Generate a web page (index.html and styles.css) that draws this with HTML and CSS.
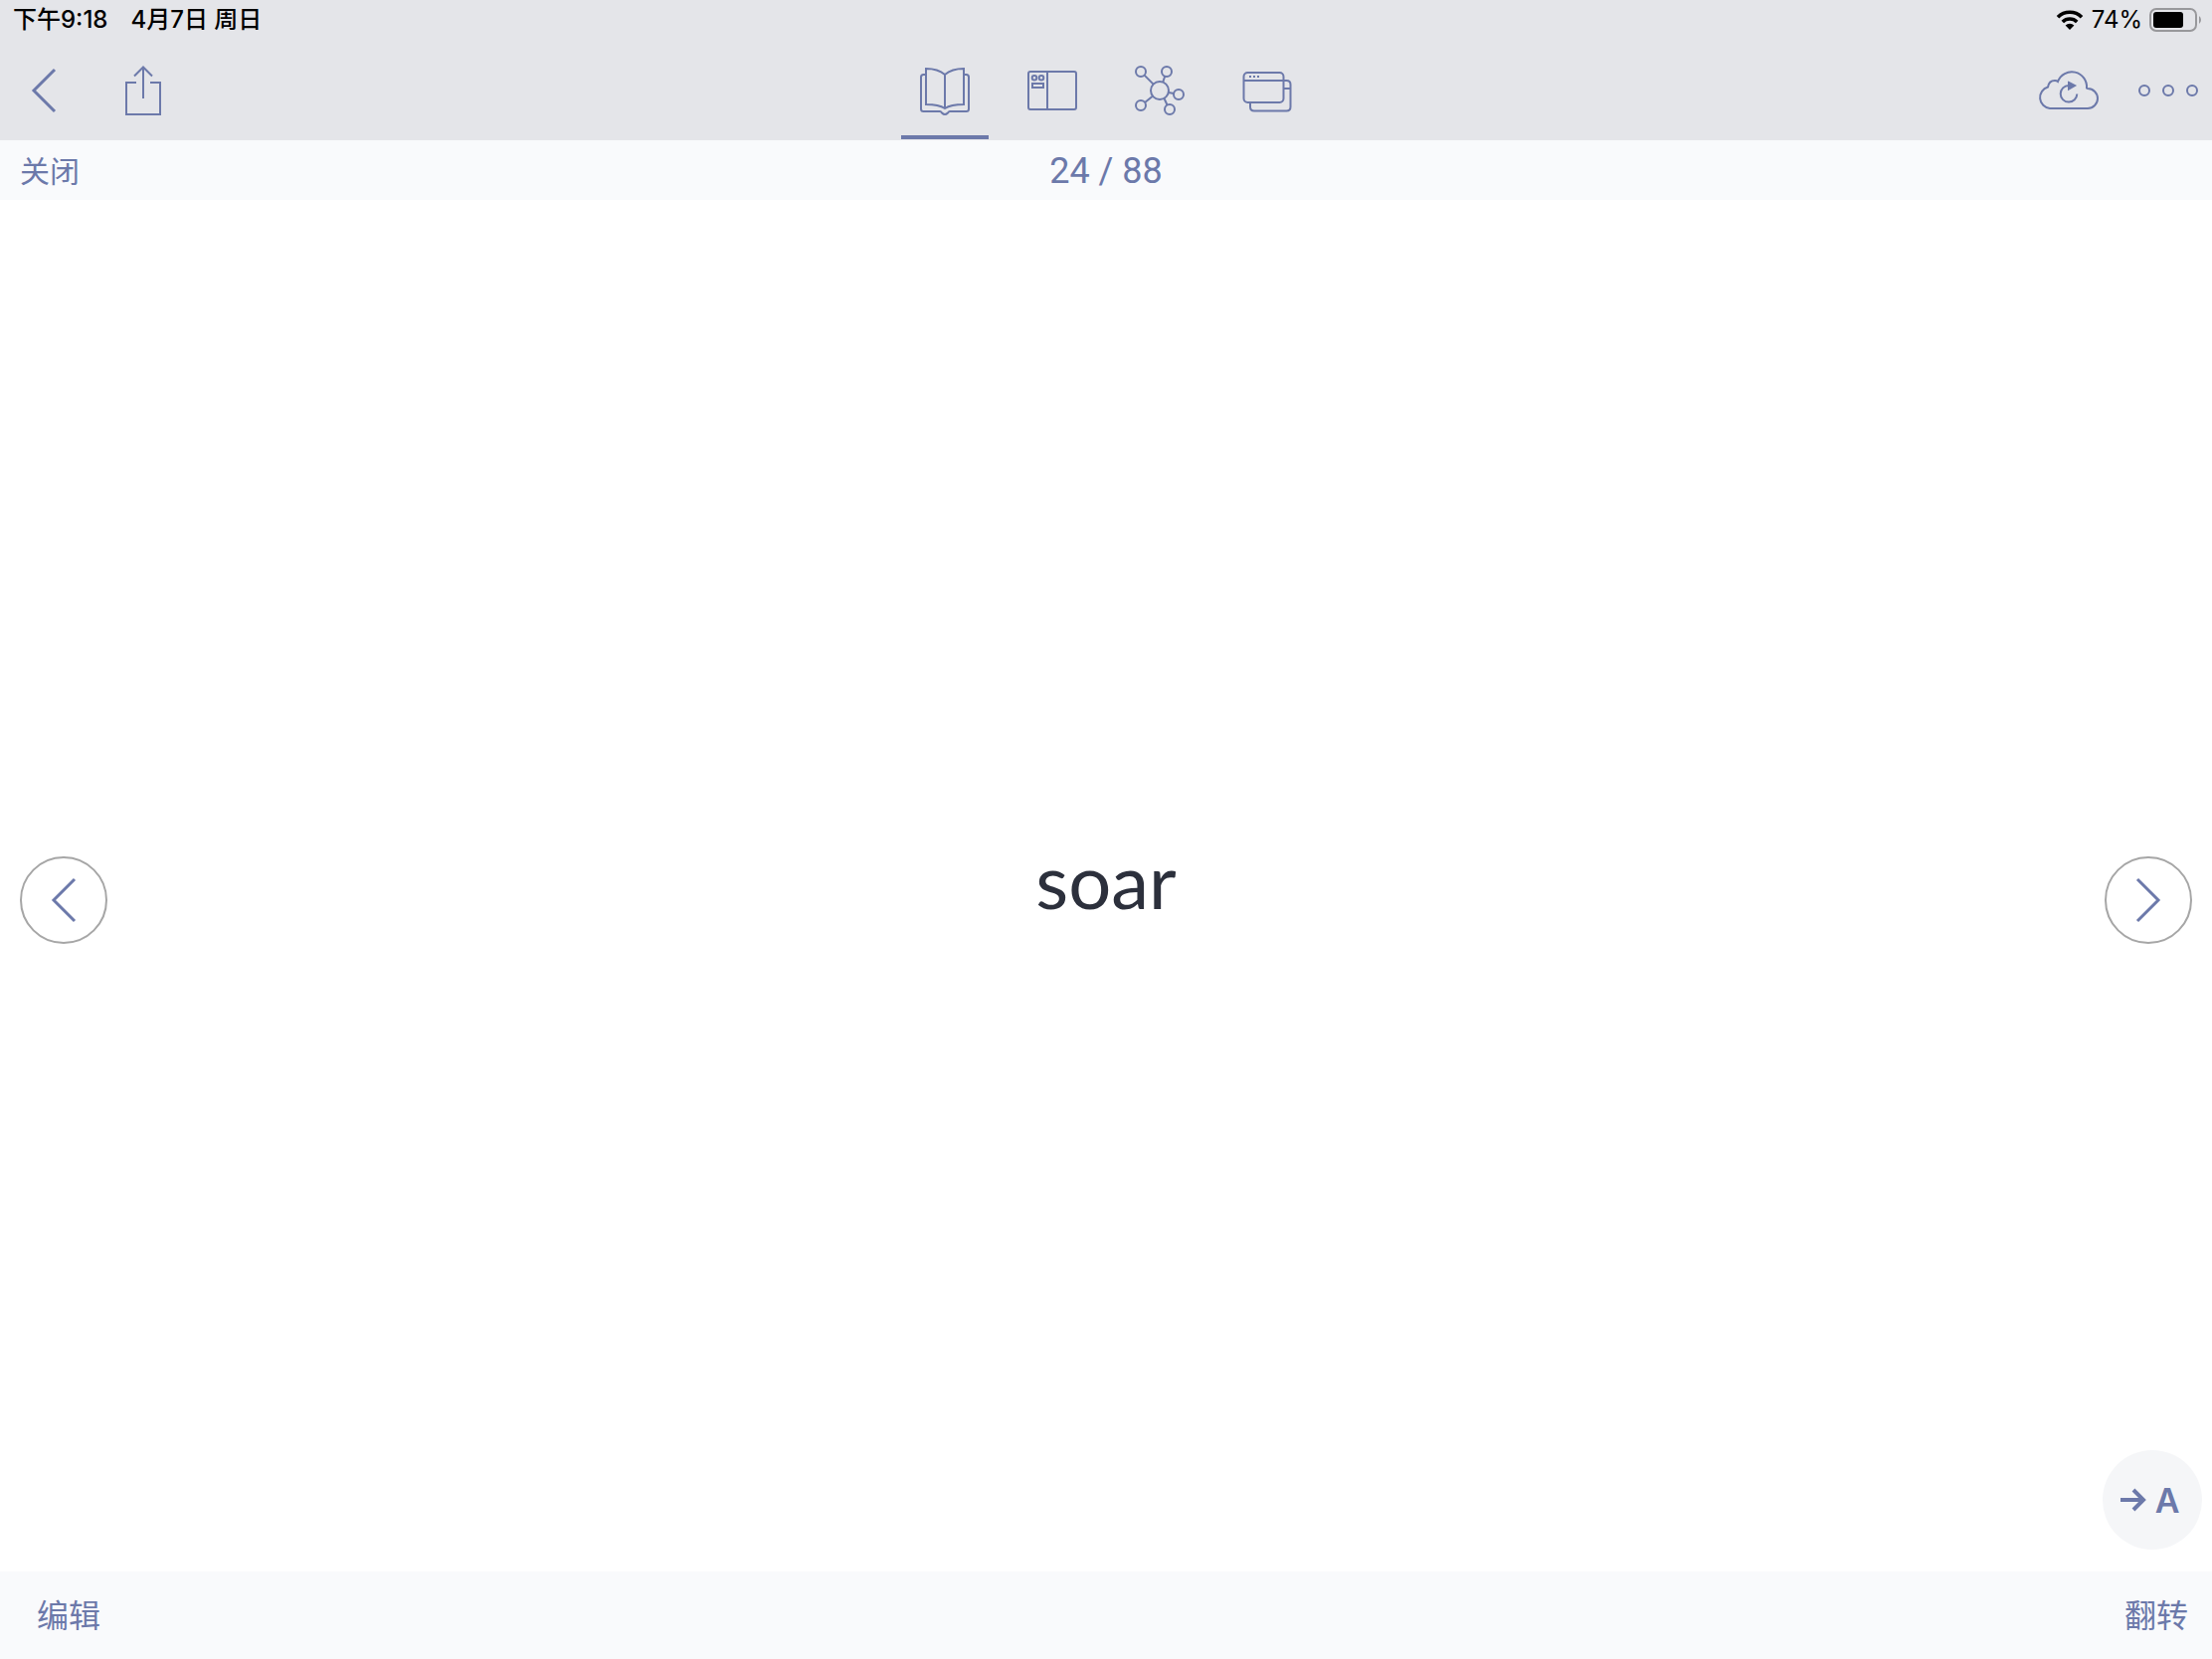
FILE: index.html
```html
<!DOCTYPE html>
<html lang="zh-CN">
  <head>
    <meta charset="UTF-8" />
    <meta name="viewport" content="width=device-width, initial-scale=1.0" />
    <title>soar</title>
    <link rel="stylesheet" href="styles.css">
  </head>
  <body>
    <header class="header">
      <div class="status">
        <span>下午9:18</span>
        <span class="date">4月7日 周日</span>
        <svg class="wifi" width="28" height="22" viewBox="0 0 28 22">
          <path d="M2 8.2a17 17 0 0 1 24 0M6.8 13a10.3 10.3 0 0 1 14.4 0" fill="none" stroke="#000" stroke-width="3.6" />
          <path d="M14 21l-4.4-4.6a6.4 6.4 0 0 1 8.8 0z" />
        </svg>
        <span class="percent">74%</span>
        <svg class="battery" width="54" height="24" viewBox="0 0 54 24">
          <rect x="1" y="1" width="46" height="22" rx="6" fill="none" stroke="#98989b" stroke-width="2" />
          <rect x="4" y="4" width="30" height="16" rx="3" />
          <path d="M50 8a5 5 0 0 1 0 8z" fill="#98989b" />
        </svg>
      </div>

      <nav class="toolbar">
        <div class="tools">
          <button type="button" class="icon-btn" aria-label="返回">
            <svg width="28" height="48" viewBox="0 0 28 48"><path class="thick" d="M25 3L4 24l21 21" /></svg>
          </button>
          <button type="button" class="icon-btn" aria-label="分享">
            <svg width="40" height="56" viewBox="0 0 40 56">
              <path d="M13 20H3v32h34V20H27M20 36V5M11 13.500l9-9 9 9" />
            </svg>
          </button>
        </div>

        <div class="tabs">
          <button type="button" class="tab active" aria-label="文档">
            <svg width="56" height="56" viewBox="0 0 56 56">
              <path d="M9 12H6.500Q4 12 4 14.500V46.500Q4 49 6.500 49H23Q24 49 25 50.500Q28 53.500 31 50.500Q32 49 33 49H49.500Q52 49 52 46.500V14.500Q52 12 49.500 12H47" />
              <path d="M28 12Q21 6 9 6V42Q22 42 28 46Q34 42 47 42V6Q35 6 28 12V46" />
            </svg>
          </button>
          <button type="button" class="tab" aria-label="分栏">
            <svg width="56" height="56" viewBox="0 0 56 56">
              <rect x="4" y="9" width="48" height="38" rx="2" />
              <path d="M23 9v38" />
              <circle cx="10" cy="15.300" r="2.300" />
              <circle cx="17" cy="15.300" r="2.300" />
              <rect x="8" y="21" width="11" height="4" />
            </svg>
          </button>
          <button type="button" class="tab" aria-label="脑图">
            <svg width="56" height="56" viewBox="0 0 56 56">
              <circle cx="28" cy="28" r="9" />
              <circle cx="9" cy="9" r="5" />
              <circle cx="35" cy="9" r="5" />
              <circle cx="47" cy="32" r="5" />
              <circle cx="38" cy="47" r="5" />
              <circle cx="9" cy="43" r="5" />
              <path d="M12.600 12.600l9 9M33.200 13.700l-2 5.800M37 30l5 1M32.500 36l3 6.500M20.500 34l-7.400 6" />
            </svg>
          </button>
          <button type="button" class="tab" aria-label="卡片">
            <svg width="56" height="56" viewBox="0 0 56 56">
              <rect x="4.500" y="10" width="40" height="30" rx="4" />
              <path d="M5 18h42.500q4 0 4 4v22.500q0 4-4 4H15q-4 0-4-4V40M45 26h6.500" />
              <path d="M10 14h2M14 14h2M18 14h2" />
            </svg>
          </button>
        </div>

        <div class="tools right">
          <button type="button" class="icon-btn" aria-label="同步">
            <svg width="64" height="42" viewBox="0 0 64 42">
              <path d="M13 39A11 11 0 0 1 11 17.500Q12 11 18 11Q20 11 21 12A15 15 0 0 1 50 18.500Q50.500 19 51 19A10 10 0 0 1 51 39Z" />
              <path d="M32 16A8.300 8.300 0 1 0 40.300 24.500" />
              <path class="solid" d="M32 13l6 3-6 3.500z" />
            </svg>
          </button>
          <button type="button" class="icon-btn" aria-label="更多">
            <svg width="64" height="16" viewBox="0 0 64 16">
              <circle cx="8" cy="8" r="5" />
              <circle cx="32" cy="8" r="5" />
              <circle cx="56" cy="8" r="5" />
            </svg>
          </button>
        </div>
      </nav>
    </header>

    <div class="progress">
      <button type="button" class="text-btn close">关闭</button>
      <span class="count">24 / 88</span>
    </div>

    <main class="stage">
      <button type="button" class="round" aria-label="上一张">
        <svg width="28" height="48" viewBox="0 0 28 48"><path class="thick" d="M25 3L4 24l21 21" /></svg>
      </button>
      <h1 class="word">soar</h1>
      <button type="button" class="round" aria-label="下一张">
        <svg width="28" height="48" viewBox="0 0 28 48"><path class="thick" d="M3 3l21 21L3 45" /></svg>
      </button>
      <button type="button" class="fab">
        <svg width="28" height="24" viewBox="0 0 28 24"><path class="bold" d="M1 12h23M14 2l10 10-10 10" /></svg>
        A
      </button>
    </main>

    <footer class="footer">
      <button type="button" class="text-btn">编辑</button>
      <button type="button" class="text-btn">翻转</button>
    </footer>
  </body>
</html>
```
FILE: styles.css
```css
*,
*::before,
*::after {
  margin: 0;
  padding: 0;
  box-sizing: border-box;
}

body {
  display: flex;
  flex-direction: column;
  min-height: 100vh;
  font-family: Inter, "Noto Sans CJK SC", sans-serif;
  color: #6c79aa;
  background-color: #fff;
}

button {
  font: inherit;
  color: inherit;
  background: none;
  border: none;
  cursor: pointer;
}

svg {
  display: block;
}

button svg {
  fill: none;
  stroke: #6c79aa;
  stroke-width: 2;
}
button .thick {
  stroke-width: 3;
}
button .bold {
  stroke-width: 4;
}
button .solid {
  fill: #6c79aa;
}

.header {
  background-color: #e4e5e9;
}

.status {
  display: flex;
  align-items: center;
  height: 40px;
  padding: 0 9px 0 13px;
  font-size: 24px;
  font-weight: 500;
  line-height: 40px;
  color: #000;
}
.date {
  margin-left: 23px;
}
.wifi {
  margin-left: auto;
}
.percent {
  margin: 0 7px 0 8px;
  font-weight: 400;
}

.toolbar {
  display: grid;
  grid-template-columns: 1fr auto 1fr;
  height: 101px;
}

.tools {
  display: flex;
  align-items: center;
  gap: 66px;
  padding: 0 12px 0 30px;
}
.tools.right {
  justify-content: flex-end;
  gap: 36px;
}

.tabs {
  display: flex;
  gap: 20px;
}
.tab {
  display: flex;
  align-items: center;
  justify-content: center;
  width: 88px;
  height: 100px;
  padding-top: 6px;
  border-bottom: 4px solid transparent;
}
.tab.active {
  border-color: #6c79aa;
}

.progress {
  display: grid;
  grid-template-columns: 1fr auto 1fr;
  align-items: center;
  height: 60px;
  padding: 2px 20px 0;
  background-color: #f9fafc;
}
.close {
  justify-self: start;
}
.count {
  font-family: Roboto, sans-serif;
  font-size: 36px;
  line-height: 58px;
}

.text-btn {
  font-size: 32px;
  line-height: 48px;
}
.progress .text-btn {
  font-size: 30px;
}

.stage {
  position: relative;
  flex: 1;
  display: flex;
  align-items: center;
  justify-content: space-between;
  padding: 28px 20px 0;
}

.word {
  padding-bottom: 40px;
  font-family: Lato, sans-serif;
  font-size: 76px;
  font-weight: 400;
  line-height: 96px;
  color: #2c303c;
}

.round {
  display: flex;
  align-items: center;
  justify-content: center;
  width: 88px;
  height: 88px;
  border: 2px solid #a6a6a6;
  border-radius: 50%;
}

.fab {
  position: absolute;
  right: 10px;
  bottom: 22px;
  display: flex;
  align-items: center;
  justify-content: center;
  gap: 8px;
  width: 100px;
  height: 100px;
  padding-right: 6px;
  font-size: 34px;
  font-weight: 600;
  background-color: #f5f6f8;
  border-radius: 50%;
}

.footer {
  display: flex;
  align-items: center;
  justify-content: space-between;
  height: 88px;
  padding: 2px 24px 0 37px;
  background-color: #f9fafc;
}
```
